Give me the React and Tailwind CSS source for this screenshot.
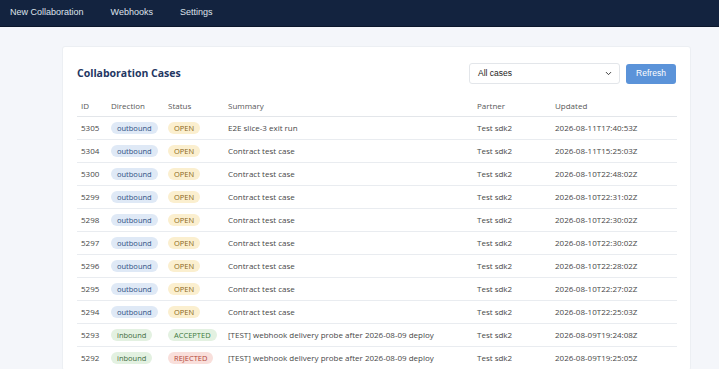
import { ChevronDown } from 'lucide-react'

const rows = [
  { id: 5305, dir: 'outbound', status: 'OPEN', summary: 'E2E slice-3 exit run', updated: '2026-08-11T17:40:53Z' },
  { id: 5304, dir: 'outbound', status: 'OPEN', summary: 'Contract test case', updated: '2026-08-11T15:25:03Z' },
  { id: 5300, dir: 'outbound', status: 'OPEN', summary: 'Contract test case', updated: '2026-08-10T22:48:02Z' },
  { id: 5299, dir: 'outbound', status: 'OPEN', summary: 'Contract test case', updated: '2026-08-10T22:31:02Z' },
  { id: 5298, dir: 'outbound', status: 'OPEN', summary: 'Contract test case', updated: '2026-08-10T22:30:02Z' },
  { id: 5297, dir: 'outbound', status: 'OPEN', summary: 'Contract test case', updated: '2026-08-10T22:30:02Z' },
  { id: 5296, dir: 'outbound', status: 'OPEN', summary: 'Contract test case', updated: '2026-08-10T22:28:02Z' },
  { id: 5295, dir: 'outbound', status: 'OPEN', summary: 'Contract test case', updated: '2026-08-10T22:27:02Z' },
  { id: 5294, dir: 'outbound', status: 'OPEN', summary: 'Contract test case', updated: '2026-08-10T22:25:03Z' },
  { id: 5293, dir: 'inbound', status: 'ACCEPTED', summary: '[TEST] webhook delivery probe after 2026-08-09 deploy', updated: '2026-08-09T19:24:08Z' },
  { id: 5292, dir: 'inbound', status: 'REJECTED', summary: '[TEST] webhook delivery probe after 2026-08-09 deploy', updated: '2026-08-09T19:25:05Z' },
]

const dirStyle = {
  outbound: 'bg-[#dfe9f6] text-[#2d4f82]',
  inbound: 'bg-[#e3f1e1] text-[#3d6b3d]',
}

const statusStyle = {
  OPEN: 'bg-[#fbefcf] text-[#8a6518]',
  ACCEPTED: 'bg-[#e3f1e1] text-[#3d7a3d]',
  REJECTED: 'bg-[#f9dfdb] text-[#b3463a]',
}

const Pill = ({ className, children }) => (
  <span className={`inline-block rounded-full px-[6px] leading-[12px] text-[7.5px] font-medium ${className}`}>
    {children}
  </span>
)

export default function App() {
  return (
    <div className="min-h-screen bg-[#f4f6fa] font-['Open_Sans','Noto_Sans',sans-serif]">
      {/* Top nav */}
      <nav className="h-[27px] bg-[#13233f] border-b border-[#0b162b] flex items-center gap-[27px] px-[10px] font-['Liberation_Sans',Arial,sans-serif] text-[9px] text-[#dfe4ec]">
        <span>New Collaboration</span>
        <span>Webhooks</span>
        <span>Settings</span>
      </nav>

      <div className="pt-[19px] pl-[62px] pr-[28px]">
        <div className="bg-white border border-[#eceff3] rounded-[3px] px-[14px] pt-[16px] w-[629px]">
          {/* Header */}
          <div className="flex items-center justify-between">
            <h2 className="text-[10.5px] font-bold text-[#1f3763]">Collaboration Cases</h2>
            <div className="flex items-center gap-[6px]">
              <div className="w-[151px] h-[21px] border border-[#e3e6ea] rounded-[3px] flex items-center justify-between pl-[8px] pr-[6px] font-['Liberation_Sans',Arial,sans-serif] text-[8.5px] text-[#222]">
                <span>All cases</span>
                <ChevronDown size={9} strokeWidth={2.5} className="text-[#333]" />
              </div>
              <button className="w-[50px] h-[20px] bg-[#5b93d9] rounded-[3px] text-white font-['Liberation_Sans',Arial,sans-serif] text-[8.5px]">
                Refresh
              </button>
            </div>
          </div>

          {/* Table */}
          <table className="mt-[12px] w-[600px] table-fixed border-collapse text-[8px] text-[#474747]">
            <colgroup>
              <col className="w-[30px]" />
              <col className="w-[57px]" />
              <col className="w-[60px]" />
              <col className="w-[249px]" />
              <col className="w-[78px]" />
              <col className="w-[126px]" />
            </colgroup>
            <thead>
              <tr className="h-[20px] border-b border-[#e3e6ea] text-left text-[#585858]">
                <th className="font-normal px-[4px]">ID</th>
                <th className="font-normal px-[4px]">Direction</th>
                <th className="font-normal px-[4px]">Status</th>
                <th className="font-normal px-[4px]">Summary</th>
                <th className="font-normal px-[4px]">Partner</th>
                <th className="font-normal px-[4px]">Updated</th>
              </tr>
            </thead>
            <tbody>
              {rows.map((r) => (
                <tr key={r.id} className="h-[23px] border-b border-[#e9ecf0]">
                  <td className="px-[4px]">{r.id}</td>
                  <td className="px-[4px]"><Pill className={dirStyle[r.dir]}>{r.dir}</Pill></td>
                  <td className="px-[4px]"><Pill className={statusStyle[r.status]}>{r.status}</Pill></td>
                  <td className="px-[4px] whitespace-nowrap">{r.summary}</td>
                  <td className="px-[4px]">Test sdk2</td>
                  <td className="px-[4px]">{r.updated}</td>
                </tr>
              ))}
            </tbody>
          </table>
        </div>
      </div>
    </div>
  )
}
